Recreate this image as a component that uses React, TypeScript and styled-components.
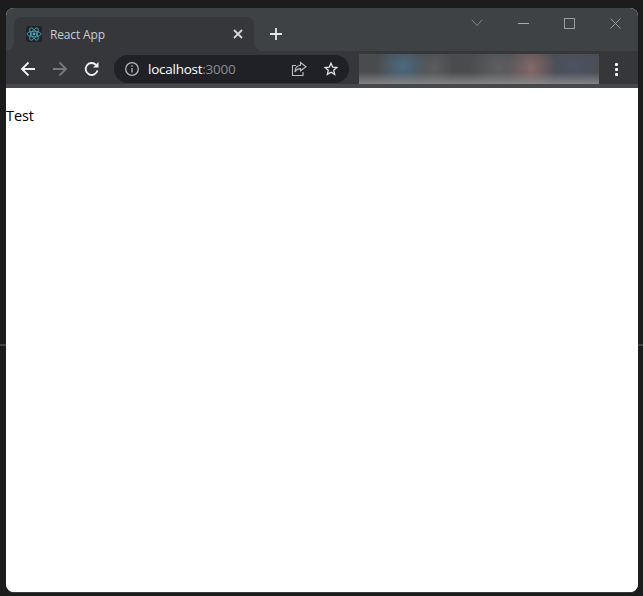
import React from "react";
import styled, { createGlobalStyle } from "styled-components";

const GlobalStyle = createGlobalStyle`
  html, body {
    margin: 0;
    padding: 0;
    height: 100%;
  }
  #root {
    height: 100%;
  }
`;

const Desktop = styled.div`
  width: 643px;
  height: 596px;
  box-sizing: border-box;
  padding: 8px 5px 4px 6px;
  overflow: hidden;
  background: linear-gradient(
    to bottom,
    #1c1c1c 0,
    #1c1c1c 344px,
    #434343 344px,
    #434343 346px,
    #1c1c1c 346px
  );
`;

const Window = styled.div`
  height: 100%;
  display: flex;
  flex-direction: column;
  border-radius: 8px;
  overflow: hidden;
  background: #fff;
  box-shadow: 0 1px 0 #3a3a3a;
  font-family: "Open Sans", "Liberation Sans", sans-serif;
`;

const TitleBar = styled.div`
  height: 43px;
  flex: none;
  display: flex;
  align-items: flex-end;
  padding-left: 8px;
  background: #3e4245;
`;

const Tab = styled.div`
  position: relative;
  width: 240px;
  height: 34px;
  box-sizing: border-box;
  display: flex;
  align-items: center;
  padding: 0 10px 0 12px;
  background: #35373b;
  border-radius: 8px 8px 0 0;

  &::before,
  &::after {
    content: "";
    position: absolute;
    bottom: 0;
    width: 8px;
    height: 8px;
  }
  &::before {
    left: -8px;
    background: radial-gradient(circle at 0 0, #3e4245 7.5px, #35373b 8px);
  }
  &::after {
    right: -8px;
    background: radial-gradient(circle at 100% 0, #3e4245 7.5px, #35373b 8px);
  }
`;

const TabIcon = styled.div`
  width: 16px;
  height: 16px;
  display: flex;
  align-items: center;
  justify-content: center;
  background: #1f2326;
  border-radius: 2px;
`;

const TabTitle = styled.span`
  flex: 1;
  margin-left: 8px;
  font-size: 12px;
  letter-spacing: -0.15px;
  color: #c6cfd6;
`;

const TabClose = styled.div`
  width: 12px;
  height: 12px;
  display: flex;
`;

const NewTab = styled.div`
  width: 16px;
  height: 34px;
  margin-left: 15px;
  display: flex;
  align-items: center;
`;

const WindowControls = styled.div`
  margin-left: auto;
  align-self: flex-start;
  height: 30px;
  display: flex;
`;

const WindowButton = styled.div`
  width: 46px;
  height: 30px;
  display: flex;
  align-items: center;
  justify-content: center;
`;

const Toolbar = styled.div`
  height: 33px;
  flex: none;
  display: flex;
  align-items: center;
  background: #35373b;
  border-bottom: 4px solid #46484b;
`;

const NavButton = styled.div`
  width: 32px;
  height: 28px;
  display: flex;
  align-items: center;
  justify-content: center;
`;

const NavGroup = styled.div`
  display: flex;
  width: 108px;
  padding: 3px 0 0 6px;
  box-sizing: border-box;
  flex: none;
`;

const Omnibox = styled.div`
  width: 235px;
  height: 28px;
  flex: none;
  box-sizing: border-box;
  display: flex;
  align-items: center;
  padding: 0 10px 0 10px;
  margin-top: 3px;
  border-radius: 14px;
  background: #1f2126;
`;

const Url = styled.span`
  flex: 1;
  margin-left: 8px;
  font-size: 13.5px;
  letter-spacing: -0.25px;
  color: #8b8d90;

  b {
    font-weight: 500;
    color: #fff;
  }
`;

const OmniIcon = styled.div`
  width: 16px;
  height: 16px;
  display: flex;
  margin-left: 16px;
`;

const BlurredExtensions = styled.div`
  width: 240px;
  height: 30px;
  flex: none;
  margin: 3px 0 0 10px;
  background:
    linear-gradient(to bottom, transparent 60%, rgba(150, 150, 150, 0.75) 100%),
    radial-gradient(ellipse 28px 24px at 44px 12px, #4c6a80 0, rgba(76, 106, 128, 0) 100%),
    radial-gradient(ellipse 20px 24px at 75px 14px, #5b5c5d 0, rgba(91, 92, 93, 0) 100%),
    radial-gradient(ellipse 26px 28px at 172px 14px, #86696a 0, rgba(134, 105, 106, 0) 100%),
    radial-gradient(ellipse 40px 28px at 215px 12px, #4b5362 0, rgba(75, 83, 98, 0) 100%),
    radial-gradient(ellipse 30px 28px at 140px 14px, #5e5f61 0, rgba(94, 95, 97, 0) 100%),
    #4a4b4d;
`;

const MenuDots = styled.div`
  margin-left: 16px;
  margin-top: 3px;
  display: flex;
  flex-direction: column;
  gap: 2px;

  i {
    display: block;
    width: 3px;
    height: 3px;
    background: #fff;
    border-radius: 1px;
  }
`;

const Page = styled.main`
  flex: 1;
  background: #fff;
  padding-top: 17px;
  font-size: 14.4px;
  line-height: 22px;
  color: #000;
`;

const ReactLogo = () => (
  <svg width="16" height="16" viewBox="-12 -12 24 24" fill="none" stroke="#4fa6bd" strokeWidth="1.3">
    <circle r="2.2" fill="#4fa6bd" stroke="none" />
    <ellipse rx="10.5" ry="4.2" />
    <ellipse rx="10.5" ry="4.2" transform="rotate(60)" />
    <ellipse rx="10.5" ry="4.2" transform="rotate(120)" />
  </svg>
);

export default function App() {
  return (
    <>
      <GlobalStyle />
      <Desktop>
        <Window>
          <TitleBar>
            <Tab>
              <TabIcon>
                <ReactLogo />
              </TabIcon>
              <TabTitle>React App</TabTitle>
              <TabClose>
                <svg width="12" height="12" viewBox="0 0 12 12" stroke="#d5d7d9" strokeWidth="1.8">
                  <path d="M2 2l8 8M10 2l-8 8" />
                </svg>
              </TabClose>
            </Tab>
            <NewTab>
              <svg width="14" height="14" viewBox="0 0 14 14" stroke="#e8e9ea" strokeWidth="1.8">
                <path d="M7 1v12M1 7h12" />
              </svg>
            </NewTab>
            <WindowControls>
              <WindowButton>
                <svg width="12" height="8" viewBox="0 0 12 8" fill="none" stroke="#85888a" strokeWidth="1">
                  <path d="M.7.7L6 6.500 11.300.7" />
                </svg>
              </WindowButton>
              <WindowButton>
                <svg width="11" height="3" viewBox="0 0 11 3" stroke="#a9abad" strokeWidth="1">
                  <path d="M0 1.500h11" />
                </svg>
              </WindowButton>
              <WindowButton>
                <svg width="11" height="11" viewBox="0 0 11 11" fill="none" stroke="#9a9c9e" strokeWidth="1">
                  <rect x=".5" y=".5" width="10" height="10" />
                </svg>
              </WindowButton>
              <WindowButton>
                <svg width="11" height="11" viewBox="0 0 11 11" fill="none" stroke="#9a9c9e" strokeWidth="1">
                  <path d="M.5.5l10 10M10.500.5l-10 10" />
                </svg>
              </WindowButton>
            </WindowControls>
          </TitleBar>
          <Toolbar>
            <NavGroup>
              <NavButton>
                <svg width="16" height="16" viewBox="0 0 16 16" fill="none" stroke="#f1f2f3" strokeWidth="1.8">
                  <path d="M15 8H2M8.500 1.500L2 8l6.500 6.500" />
                </svg>
              </NavButton>
              <NavButton>
                <svg width="16" height="16" viewBox="0 0 16 16" fill="none" stroke="#77797c" strokeWidth="1.8">
                  <path d="M1 8h13M7.500 1.500L14 8l-6.500 6.500" />
                </svg>
              </NavButton>
              <NavButton>
                <svg width="16" height="16" viewBox="0 0 16 16" fill="none" stroke="#f1f2f3" strokeWidth="1.8">
                  <path d="M13.500 9.500A6 6 0 1 1 12 3.800" />
                  <path d="M14.500 1v5.500H9z" fill="#f1f2f3" stroke="none" />
                </svg>
              </NavButton>
            </NavGroup>
            <Omnibox>
              <svg width="16" height="16" viewBox="0 0 16 16" fill="none" stroke="#b4b6b8" strokeWidth="1.3">
                <circle cx="8" cy="8" r="6.300" />
                <path d="M8 7v4.500M8 4.200v1.500" />
              </svg>
              <Url>
                <b>localhost</b>:3000
              </Url>
              <OmniIcon>
                <svg width="16" height="16" viewBox="0 0 16 16" fill="none" stroke="#bcbec0" strokeWidth="1.1">
                  <path d="M5 4.500H1.500v10h10.500V11" />
                  <path d="M9.500 1.500L15 5.800l-5.500 4V7.600C7 7.600 5 9 4 11c0-4 2-6.500 5.500-6.800z" />
                </svg>
              </OmniIcon>
              <OmniIcon>
                <svg width="16" height="16" viewBox="0 0 16 16" fill="none" stroke="#e2e3e4" strokeWidth="1.300">
                  <path d="M8 2.200l1.700 3.900 4.200.4-3.200 2.800 1 4.100L8 11.300l-3.700 2.100 1-4.100-3.200-2.800 4.200-.4z" />
                </svg>
              </OmniIcon>
            </Omnibox>
            <BlurredExtensions />
            <MenuDots>
              <i />
              <i />
              <i />
            </MenuDots>
          </Toolbar>
          <Page>Test</Page>
        </Window>
      </Desktop>
    </>
  );
}
